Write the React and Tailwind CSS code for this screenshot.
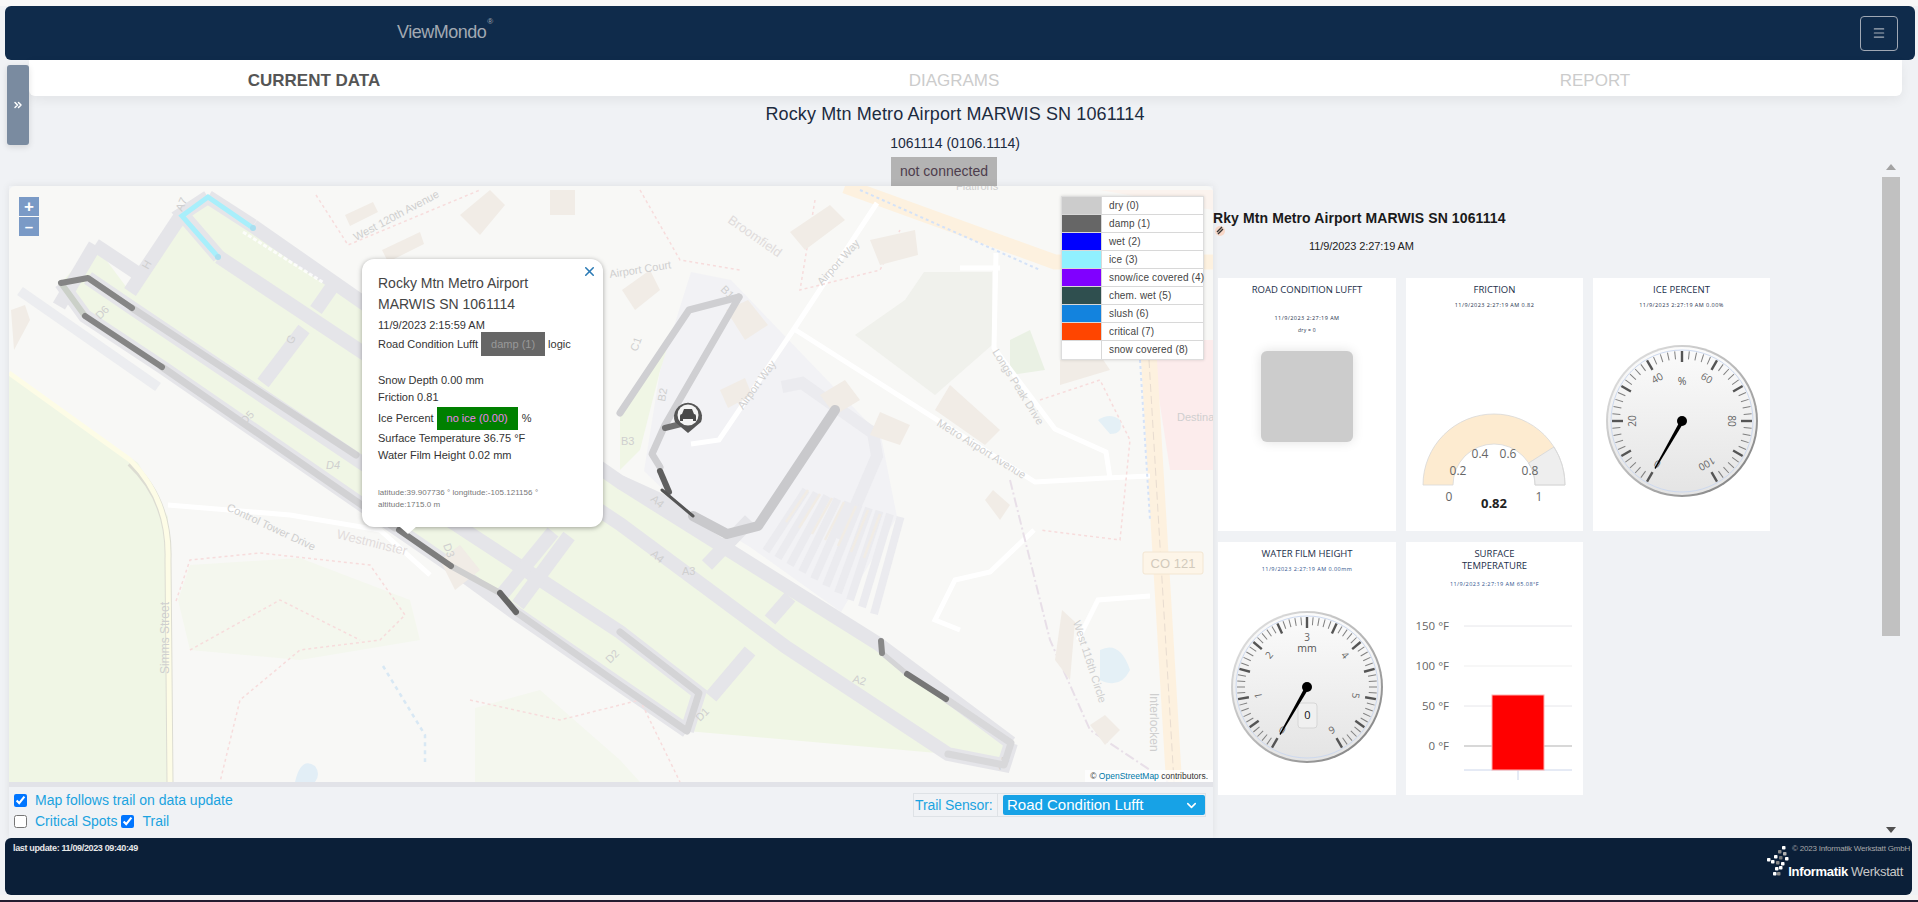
import React from "react";
import { ChevronDown, ChevronsRight, Menu, X } from "lucide-react";

const legend = [
  ["#cccccc", "dry (0)"],
  ["#666666", "damp (1)"],
  ["#0000ff", "wet (2)"],
  ["#90f0ff", "ice (3)"],
  ["#8000ff", "snow/ice covered (4)"],
  ["#2f4f4f", "chem. wet (5)"],
  ["#1383de", "slush (6)"],
  ["#ff4500", "critical (7)"],
  ["#ffffff", "snow covered (8)"],
];

const grass = [
  "208,197 620,482 877,643 1011,743 1004,765 948,754 687,731 620,685 451,566 85,316 61,283 95,245 130,292 182,214",
  "620,410 687,310 697,278 660,371 640,450 620,470",
  "9,375 138,463 168,517 170,782 9,782",
];

const paleGrass = [
  "475,708 540,690 620,760 640,782 475,782",
  "178,600 190,565 300,558 410,600 420,640 300,660 190,650",
];

const lanes = [
  "253,226 620,482 877,643 1011,743",
  "219,257 362,352 620,524 786,647 948,754 1004,765 1011,743",
  "88,278 132,308 362,463 620,632 699,693 687,731",
  "61,283 85,316 162,367 451,566 514,612 620,685 687,731",
  "208,197 253,226",
  "208,197 182,214 219,257",
  "182,214 130,292",
  "95,245 59,306",
  "95,245 146,279",
  "304,329 263,383",
  "332,287 316,310",
  "553,532 500,597",
  "569,536 518,605",
  "750,651 711,697",
  "790,597 770,620",
  "620,482 660,500 700,530",
  "707,565 750,520",
];

const roads = [
  "877,203 794,329 719,440 691,444",
  "794,329 1035,482 1106,478 1150,476",
  "996,253 994,348 1055,429 1106,452 1110,478",
  "1034,530 990,572 955,580 935,620 960,630",
  "1078,640 1098,600 1150,596",
  "168,505 290,515 380,530 430,575",
  "1000,268 960,268",
];

const pinkPaths = [
  "176,601 190,560 260,553 370,565 405,615 380,640 300,650 240,700 220,782",
  "190,650 280,600 360,640",
  "316,195 348,245 480,190",
  "815,200 800,290 880,270 900,230",
  "1040,400 1100,380 1130,440 1120,540 1040,530",
  "470,700 560,720 640,700 680,782",
  "640,190 680,260 740,270",
];

const buildings = [
  "345,215 373,202 378,212 350,226",
  "382,250 420,232 424,244 388,262",
  "460,215 490,190 505,205 480,235",
  "550,190 575,190 575,215 550,215",
  "726,310 748,300 768,325 745,340",
  "720,390 745,378 752,395 728,408",
  "790,232 830,205 845,220 805,250",
  "870,240 915,230 918,255 880,265",
  "950,385 1000,430 985,445 935,410",
  "993,490 1010,505 1000,520 985,500",
  "820,395 845,380 860,400 835,415",
  "880,412 910,425 900,445 870,435",
  "1062,610 1075,622 1070,680 1055,660",
  "1090,725 1105,715 1120,730 1105,745",
  "622,290 650,270 660,290 635,310",
  "11,310 25,305 30,320 14,350",
  "1060,360 1090,340 1110,370 1060,385",
  "440,560 460,545 480,570 455,590",
];

const fullTrail = [
  ["61,283 85,316", "#cbd0c8", 6],
  ["132,308 356,455", "#d2d2d4", 7],
  ["162,367 395,528", "#d2d2d4", 7],
  ["451,566 500,593", "#cfcfcf", 6],
  ["516,612 620,685 687,731 699,693 620,632", "#d4d4d6", 7],
  ["739,297 689,310 620,413", "#cfcfd2", 7],
  ["739,297 665,425 652,454 660,467", "#cfcfd2", 7],
  ["693,516 727,534 758,526 835,410", "#c9c9cc", 10],
  ["882,653 907,674", "#d4d4d6", 5],
  ["946,699 1011,743 1004,765 948,754", "#d8d8da", 7],
];

const darkTrail = [
  ["61,283 88,278 132,308", "#858585", 6],
  ["85,316 162,367", "#858585", 6],
  ["399,530 451,566", "#7d7d7d", 6],
  ["500,593 516,612", "#666666", 6],
  ["665,428 685,423", "#707070", 6],
  ["660,471 669,492", "#5f5f5f", 6],
  ["662,490 693,516", "#555555", 3],
  ["881,641 882,653", "#888888", 6],
  ["907,674 946,699", "#777777", 6],
];

function MapDrawing() {
  return (
    <svg viewBox="9 186 1204 596" className="block h-full w-full bg-[#f8f8f6]">
      {grass.map((p) => (
        <polygon key={p} points={p} fill="#f0f6e5" />
      ))}
      {paleGrass.map((p) => (
        <polygon key={p} points={p} fill="#f4f7ee" />
      ))}
      <polygon points="691,272 731,280 881,436 897,517 841,612 750,547 679,505 644,471 660,371" fill="#f2f2f5" />
      <polyline points="782,387 802,383 873,433 877,456 841,540" fill="none" stroke="#ebebef" strokeWidth="12" />
      <polygon points="924,272 992,272 992,345 935,395 855,335 905,300" fill="#f0f1ec" />
      <polygon points="1150,340 1213,340 1213,470 1170,470" fill="#fcecec" />
      <polygon points="1010,340 1030,330 1045,370 1010,375" fill="#eaf1e4" />
      <polygon points="1000,190 1213,190 1213,210 1100,190" fill="#fbf3ee" />
      <path d="M130 463 Q170 500 168 560 L170 782" fill="none" stroke="#dcdcd2" strokeWidth="7" />
      <path d="M9 373 L130 460 Q170 500 168 560 L170 782" fill="none" stroke="#fdfce6" strokeWidth="5" />
      {lanes.map((p) => (
        <polyline key={p} points={p} fill="none" stroke="#e5e5e9" strokeWidth="14" />
      ))}
      <polyline points="20,291 158,387" fill="none" stroke="#ecedf0" strokeWidth="10" />
      <polyline points="243,232 324,283" fill="none" stroke="#ffffff" strokeWidth="3" strokeDasharray="4 2" opacity="0.8" />
      {Array.from({ length: 10 }, (_, i) => (
        <line key={i} x1={766 + i * 12} y1={551 + i * 7} x2={806 + i * 10.5} y2={490 + i * 3} stroke="#ebebef" strokeWidth="8" />
      ))}
      {Array.from({ length: 7 }, (_, i) => (
        <line key={i} x1={786 + i * 13} y1={522 + i * 6} x2={808 + i * 12} y2={490 + i * 4} stroke="#f1ece5" strokeWidth="2.5" />
      ))}
      <polyline points="845,186 1055,262 1213,262" fill="none" stroke="#fdf1df" strokeWidth="15" />
      <polygon points="1141,360 1157,360 1182,782 1166,782" fill="#fdf1df" />
      <line x1="1149" y1="360" x2="1174" y2="782" stroke="#e8dcd0" strokeDasharray="8 4" />
      {roads.map((p) => (
        <polyline key={p} points={p} fill="none" stroke="#ffffff" strokeWidth="5" />
      ))}
      {pinkPaths.map((p) => (
        <polyline key={p} points={p} fill="none" stroke="#f7dcdc" strokeWidth="1.5" strokeDasharray="3 3" />
      ))}
      <polyline points="860,190 1040,270" fill="none" stroke="#d4e2f8" strokeWidth="2" strokeDasharray="3 3" />
      <polyline points="1140,360 1150,520" fill="none" stroke="#d4e2f8" strokeWidth="2" strokeDasharray="3 3" />
      <polyline points="383,666 425,735 425,762" fill="none" stroke="#d8e8f4" strokeWidth="2.5" strokeDasharray="4 4" />
      <polyline points="1010,480 1050,640 1090,730 1180,790" fill="none" stroke="#e8dfe8" strokeWidth="2" strokeDasharray="10 3 2 3" />
      <path d="M1100 650 q20 -10 30 20 q-10 20 -30 10 z" fill="#e4f0f6" />
      <path d="M1098 420 q12 -8 22 0 q4 14 -10 14 z" fill="#e4f0f6" />
      <path d="M295 782 q6 -26 20 -16 q6 8 0 16 z" fill="#e2eef6" />
      {buildings.map((p) => (
        <polygon key={p} points={p} fill="#f1ece6" />
      ))}
      <g fontFamily="'Liberation Sans', sans-serif" fill="#cfcfcf" fontSize="11">
        <text x="356" y="241" transform="rotate(-28 356 241)">West 120th Avenue</text>
        <text x="336" y="538" fontSize="13" fill="#e2dcdc" transform="rotate(14 336 538)">Westminster</text>
        <text x="226" y="510" transform="rotate(25 226 510)">Control Tower Drive</text>
        <text x="169" y="674" fontSize="12" transform="rotate(-90 169 674)">Simms Street</text>
        <text x="936" y="425" transform="rotate(32 936 425)">Metro Airport Avenue</text>
        <text x="992" y="352" transform="rotate(58 992 352)">Longs Peak Drive</text>
        <text x="822" y="286" transform="rotate(-48 822 286)">Airport Way</text>
        <text x="743" y="410" transform="rotate(-54 743 410)">Airport Way</text>
        <text x="727" y="222" fontSize="13" fill="#e0dcdc" transform="rotate(35 727 222)">Broomfield</text>
        <text x="610" y="278" transform="rotate(-9 610 278)">Airport Court</text>
        <text x="1150" y="693" fontSize="12" transform="rotate(90 1150 693)">Interlocken</text>
        <text x="1073" y="622" transform="rotate(72 1073 622)">West 116th Circle</text>
        <text x="1177" y="421">Destina</text>
        <text x="956" y="190">Flatirons</text>
        <text x="100" y="320" transform="rotate(-45 100 320)">D6</text>
        <text x="245" y="425" transform="rotate(-45 245 425)">D5</text>
        <text x="326" y="469" fontStyle="italic">D4</text>
        <text x="443" y="545" transform="rotate(70 443 545)">D3</text>
        <text x="610" y="664" transform="rotate(-45 610 664)">D2</text>
        <text x="700" y="722" transform="rotate(-45 700 722)">D1</text>
        <text x="182" y="212" transform="rotate(-65 182 212)">A7</text>
        <text x="650" y="500" transform="rotate(40 650 500)">A4</text>
        <text x="650" y="555" transform="rotate(40 650 555)">A4</text>
        <text x="682" y="575">A3</text>
        <text x="852" y="682" transform="rotate(15 852 682)">A2</text>
        <text x="1000" y="770" transform="rotate(-45 1000 770)">A1</text>
        <text x="720" y="290" transform="rotate(45 720 290)">B1</text>
        <text x="665" y="402" transform="rotate(-80 665 402)">B2</text>
        <text x="621" y="445">B3</text>
        <text x="637" y="352" transform="rotate(-70 637 352)">C1</text>
        <text x="292" y="345" transform="rotate(-60 292 345)">G</text>
        <text x="148" y="270" transform="rotate(-60 148 270)">H</text>
      </g>
      <rect x="1143" y="552" width="60" height="22" rx="2" fill="#fdf5e8" stroke="#f3e6d2" />
      <text x="1173" y="568" textAnchor="middle" fontFamily="'Liberation Sans', sans-serif" fontSize="13" fill="#d2cabc">CO 121</text>

      <polyline points="253,228 208,197 182,216 218,257" fill="none" stroke="#a8effb" strokeWidth="5" />
      <circle cx="253" cy="228" r="3" fill="#a8dff0" />
      <circle cx="218" cy="257" r="3" fill="#a8dff0" />
      {fullTrail.map(([p, c, w]) => (
        <polyline key={p} points={p} fill="none" stroke={c} strokeWidth={w} strokeLinejoin="round" strokeLinecap="round" />
      ))}
      {darkTrail.map(([p, c, w]) => (
        <polyline key={p} points={p} fill="none" stroke={c} strokeWidth={w} strokeLinejoin="round" strokeLinecap="round" />
      ))}

      <path d="M675 422 a14 14 0 1 1 26 0 l-13 11 z" fill="#555555" />
      <circle cx="688" cy="415" r="10.5" fill="#f4f4f4" />
      <path d="M682 414 l2 -5 h8 l2 5 a2 2 0 0 1 2 2 v5 h-3 v-2 h-10 v2 h-3 v-5 a2 2 0 0 1 2 -2 z" fill="#4a4a4a" />
    </svg>
  );
}

function Gauge({ id, step, majorEvery, labels, unit, unitY, showBox }) {
  const ticks = [];
  for (let a = -150, i = 0; a <= 150; a += step, i++) ticks.push({ a, major: i % majorEvery === 0 });
  return (
    <svg viewBox="0 0 160 160" className="block h-[160px] w-[160px]">
      <defs>
        <linearGradient id={`rim-${id}`} x1="0" y1="0" x2="1" y2="1">
          <stop offset="0" stopColor="#e8e8e8" />
          <stop offset="0.5" stopColor="#b8b8b8" />
          <stop offset="1" stopColor="#777777" />
        </linearGradient>
        <linearGradient id={`face-${id}`} x1="0" y1="0" x2="0" y2="1">
          <stop offset="0" stopColor="#fbfbfb" />
          <stop offset="1" stopColor="#e4e4e4" />
        </linearGradient>
      </defs>
      <circle cx="80" cy="80" r="76" fill={`url(#rim-${id})`} />
      <circle cx="80" cy="80" r="74" fill={`url(#face-${id})`} />
      <circle cx="80" cy="80" r="71" fill="none" stroke="#cdd9ef" />
      {ticks.map(({ a, major }) => (
        <line
          key={a}
          x1="80"
          y1="10"
          x2="80"
          y2={major ? 21 : 18}
          stroke={major ? "#555555" : "#808080"}
          strokeWidth={major ? 2.4 : 1}
          transform={`rotate(${a} 80 80)`}
        />
      ))}
      {labels.map(([t, a]) => (
        <text
          key={t}
          x="80"
          y="34"
          textAnchor="middle"
          fontSize="10"
          fill="#666666"
          fontFamily="'Open Sans', sans-serif"
          transform={`rotate(${a} 80 80)`}
        >
          {t}
        </text>
      ))}
      <text x="80" y={unitY} textAnchor="middle" fontSize="10.5" fill="#555555" fontFamily="'Open Sans', sans-serif">
        {unit}
      </text>
      {showBox && (
        <g>
          <rect x="71" y="96" width="19" height="25" rx="3" fill="#f0f0f0" stroke="#d6d6d6" />
          <text x="80.5" y="112" textAnchor="middle" fontSize="11" fill="#111111" fontFamily="'Open Sans', sans-serif">0</text>
        </g>
      )}
      <polygon points="78,80 82,81 53.5,128 52.5,127" fill="#000000" />
      <circle cx="80" cy="80" r="5" fill="#000000" />
    </svg>
  );
}

function arc(a0, a1, r0, r1, cx, cy) {
  const pt = (r, a) => `${cx - r * Math.cos(a)} ${cy - r * Math.sin(a)}`;
  return `M${pt(r1, a0)} A${r1} ${r1} 0 0 1 ${pt(r1, a1)} L${pt(r0, a1)} A${r0} ${r0} 0 0 0 ${pt(r0, a0)} Z`;
}

function FrictionGauge() {
  const cut = 0.82 * Math.PI;
  return (
    <svg viewBox="0 0 177 110" className="block h-[110px] w-[177px]">
      <path d={arc(0, cut, 41, 71, 88, 77)} fill="#fdebd0" />
      <path d={arc(cut, Math.PI, 41, 71, 88, 77)} fill="#eeeeee" stroke="#d4d4d4" strokeWidth="0.8" />
      <path d={arc(0, Math.PI, 41, 71, 88, 77)} fill="none" stroke="#d8d8d8" strokeWidth="0.8" />
      <g fontFamily="'Open Sans', sans-serif" fontSize="12" fill="#666666" textAnchor="middle">
        <text x="43" y="93">0</text>
        <text x="133" y="93">1</text>
        <text x="52" y="67">0.2</text>
        <text x="74" y="50">0.4</text>
        <text x="102" y="50">0.6</text>
        <text x="124" y="67">0.8</text>
      </g>
      <text x="88" y="100" textAnchor="middle" fontFamily="'Open Sans', sans-serif" fontSize="13" fontWeight="700" fill="#222222">0.82</text>
    </svg>
  );
}

function TempChart() {
  const rows = [["150 °F", 25, "#e6e6ea"], ["100 °F", 65, "#efefef"], ["50 °F", 105, "#e6e6ea"], ["0 °F", 145, "#d8d8d8"]];
  return (
    <svg viewBox="0 0 177 190" className="block h-[190px] w-[177px]">
      {rows.map(([t, y, c]) => (
        <g key={t}>
          <line x1="58" x2="166" y1={y} y2={y} stroke={c} strokeWidth={t === "0 °F" ? 2 : 1} />
          <text x="43" y={y + 4} textAnchor="end" fontFamily="'Open Sans', sans-serif" fontSize="11.5" fill="#666666">{t}</text>
        </g>
      ))}
      <line x1="58" x2="166" y1="169" y2="169" stroke="#ccd6eb" />
      <line x1="112" x2="112" y1="169" y2="179" stroke="#ccd6eb" />
      <rect x="86" y="94" width="52" height="75" fill="#ff0000" stroke="#ffb0b0" />
    </svg>
  );
}

function Card({ title, stamp, extra, stampGap = "mt-[5px]", stampColor = "text-[#1c2f4a]", children, topClass = "" }) {
  return (
    <div className="flex h-[253px] flex-col items-center bg-white pt-[6px] font-['Open_Sans',sans-serif]">
      <div className="text-center text-[9.5px] leading-[12px] whitespace-nowrap text-[#1c2f4a]">{title}</div>
      <div className={`${stampGap} whitespace-nowrap text-[5.5px] leading-[8px] tracking-[0.45px] ${stampColor}`}>{stamp}</div>
      {extra && <div className="mt-[4px] text-[5px] leading-[8px] tracking-[0.3px] text-[#1c2f4a]">{extra}</div>}
      <div className={topClass}>{children}</div>
    </div>
  );
}

function Scrollbar() {
  return (
    <div className="mr-[18px] ml-auto flex h-full w-[18px] shrink-0 flex-col items-center">
      <div className="mt-[-22px] h-0 w-0 border-x-[5px] border-b-[6px] border-x-transparent border-b-[#a3a3a3]" />
      <div className="mt-[7px] h-[459px] w-[18px] bg-[#c1c1c1]" />
      <div className="mt-[191px] h-0 w-0 border-x-[5px] border-t-[6px] border-x-transparent border-t-[#505050]" />
    </div>
  );
}

function LogoDots() {
  const dots = [
    [17, 1, "#ffffff"], [13, 5, "#8a8a8a"], [18, 7, "#b0b0b0"], [9, 10, "#ffffff"], [14, 11, "#777777"],
    [20, 12, "#ffffff"], [2, 13, "#ffffff"], [6, 15, "#ffffff"], [11, 16, "#8a8a8a"], [16, 17, "#ffffff"],
    [10, 22, "#ffffff"], [14, 21, "#ffffff"], [8, 27, "#ffffff"], [12, 27, "#8a8a8a"],
  ];
  return (
    <svg viewBox="0 0 25 32" className="h-[32px] w-[25px]">
      {dots.map(([x, y, c]) => (
        <rect key={`${x}-${y}`} x={x} y={y} width="3.5" height="3.5" rx="0.8" fill={c} />
      ))}
    </svg>
  );
}

export default function App() {
  return (
    <div className="relative flex h-[902px] w-full flex-col overflow-hidden bg-[#f0f2f5] font-['Liberation_Sans',Arial,sans-serif]">
      <div className="h-[6px] shrink-0 bg-[#f8f8f8]" />
      <header className="mr-[3px] ml-[5px] flex h-[54px] shrink-0 items-center rounded-[6px] bg-[#0f2b4b] pr-[17px]">
        <div className="mb-[2px] ml-[392px] flex items-start text-[18px] tracking-[-0.5px] text-[#a2a9b2]">
          ViewMondo<span className="mt-[-3px] ml-[1px] text-[8px]">®</span>
        </div>
        <button className="ml-auto flex h-[35px] w-[38px] items-center justify-center rounded-[4px] border border-[#a0a8b4] text-[#a8b0ba]">
          <Menu size={14} strokeWidth={2} />
        </button>
      </header>

      <nav className="mr-[16px] ml-[29px] grid h-[36px] shrink-0 grid-cols-[570px_710px_572px] items-center rounded-b-[6px] bg-white pt-[6px] text-[17px] shadow-[0_4px_12px_rgba(0,0,0,0.06)]">
        <div className="text-center font-bold text-[#555555]">CURRENT DATA</div>
        <div className="text-center text-[#cccccc]">DIAGRAMS</div>
        <div className="text-center text-[#cccccc]">REPORT</div>
      </nav>

      {/* collapsed side menu handle */}
      <button className="absolute top-[65px] left-[7px] flex h-[80px] w-[22px] items-center justify-center rounded-[3px] bg-[#7a8ba0] text-white shadow-[0_2px_6px_rgba(0,0,0,0.12)]">
        <ChevronsRight size={12} strokeWidth={3} />
      </button>

      <div className="mr-[8px] flex h-[90px] shrink-0 flex-col items-center text-[#1c2b3f]">
        <h1 className="mt-[7px] text-[18px] leading-[22px] tracking-[0.12px]">Rocky Mtn Metro Airport MARWIS SN 1061114</h1>
        <div className="mt-[8px] text-[14px] leading-[20px]">1061114 (0106.1114)</div>
        <div className="mt-[4px] mr-[22px] flex h-[29px] w-[106px] items-center justify-center bg-[#b3b3b3] text-[14px] text-[#4d3d4d]">
          not connected
        </div>
      </div>

      <main className="flex h-[652px] shrink-0">
        <section className="ml-[9px] flex w-[1204px] shrink-0 flex-col shadow-[0_0_8px_rgba(0,0,0,0.08)]">
          <div className="relative h-[596px] shrink-0 overflow-hidden rounded-t-[6px]">
            <MapDrawing />

            <div className="absolute top-[11px] left-[10px] flex w-[20px] flex-col gap-[1px] bg-white/40">
              <button className="flex h-[19px] items-center justify-center bg-[#7a9ac6] text-[17px] leading-none font-bold text-white">+</button>
              <button className="flex h-[19px] items-center justify-center bg-[#7a9ac6] text-[15px] leading-none font-bold text-white">–</button>
            </div>

            <div className="absolute top-[10px] left-[1052px] w-[143px] border border-[#dddddd] bg-white shadow-[0_0_3px_rgba(0,0,0,0.15)]">
              {legend.map(([color, label]) => (
                <div key={label} className="flex h-[18px] border-b border-[#d8d8d8] last:border-b-0">
                  <div className="h-full w-[40px] shrink-0 border-r border-[#d8d8d8]" style={{ backgroundColor: color }} />
                  <div className="pl-[7px] text-[10px] leading-[18px] tracking-[0.15px] whitespace-nowrap text-[#444444]">{label}</div>
                </div>
              ))}
            </div>

            <div className="absolute top-[73px] left-[353px] h-[268px] w-[241px] rounded-[12px] bg-white pt-[14px] pl-[16px] text-[11px] leading-[17px] text-[#333333] shadow-[0_1px_5px_rgba(0,0,0,0.35)]">
              <X size={15} strokeWidth={2.5} className="absolute top-[5px] right-[6px] text-[#2a7ab5]" />
              <div className="text-[14px] leading-[21px] text-[#444444]">
                Rocky Mtn Metro Airport
                <br />
                MARWIS SN 1061114
              </div>
              <div className="mt-[1px] leading-[18px]">11/9/2023 2:15:59 AM</div>
              <div className="mt-[-2px] flex h-[24px] items-center">
                Road Condition Lufft
                <span className="ml-[3px] flex h-[24px] w-[64px] items-center justify-center bg-[#666666] text-[#999999]">damp (1)</span>
                <span className="ml-[3px]">logic</span>
              </div>
              <div className="mt-[16px]">Snow Depth 0.00 mm</div>
              <div>Friction 0.81</div>
              <div className="mt-[1px] flex h-[23px] items-center">
                Ice Percent
                <span className="ml-[3px] flex h-[23px] w-[81px] items-center justify-center bg-[#008000] text-[#ee82ee]">no ice (0.00)</span>
                <span className="ml-[4px]">%</span>
              </div>
              <div>Surface Temperature 36.75 °F</div>
              <div>Water Film Height 0.02 mm</div>
              <div className="mt-[23px] text-[8px] leading-[12px] tracking-[0.05px] text-[#777777]">
                latitude:39.907736 ° longitude:-105.121156 °
                <br />
                altitude:1715.0 m
              </div>
              <div className="absolute bottom-[-7px] left-[37px] h-0 w-0 border-x-[9px] border-t-[8px] border-x-transparent border-t-white" />
            </div>

            <div className="absolute right-0 bottom-0 bg-white/75 px-[5px] text-[8.5px] leading-[12px] text-[#333333]">
              © <span className="text-[#0078a8]">OpenStreetMap</span> contributors.
            </div>
          </div>

          <div className="h-[5px] shrink-0 bg-[#e2e3e8]" />

          <div className="flex flex-1 items-start justify-between bg-[#f0f2f5] pr-[7px] pl-[5px] text-[14px] text-[#1ba3e0]">
            <div className="mt-[3px] flex flex-col">
              <label className="flex h-[21px] items-center">
                <input type="checkbox" defaultChecked className="h-[13px] w-[13px]" />
                <span className="ml-[8px]">Map follows trail on data update</span>
              </label>
              <label className="flex h-[21px] items-center">
                <input type="checkbox" className="h-[13px] w-[13px]" />
                <span className="ml-[8px]">Critical Spots</span>
                <input type="checkbox" defaultChecked className="ml-[4px] h-[13px] w-[13px]" />
                <span className="ml-[8px]">Trail</span>
              </label>
            </div>
            <div className="mt-[6px] flex h-[24px] w-[293px] items-center border border-[#dee2e6] bg-[#f0f2f5]">
              <span className="w-[84px] shrink-0 border-r border-[#dee2e6] pl-[1px] text-[14px] leading-[22px] tracking-[-0.1px]">Trail Sensor:</span>
              <div className="ml-[5px] flex h-[20px] flex-1 items-center justify-between rounded-[2px] bg-[#17a2e6] pr-[6px] pl-[4px] text-[15px] text-white">
                Road Condition Lufft
                <ChevronDown size={15} strokeWidth={2.5} />
              </div>
            </div>
          </div>
        </section>

        <section className="flex min-w-0 flex-1">
          <div className="w-[560px] shrink-0">
            <div className="mt-[24px] text-[14px] leading-[16px] font-bold tracking-[0.1px] whitespace-nowrap text-[#1a1a1a]">
              Rky Mtn Metro Airport MARWIS SN 1061114
            </div>
            <svg viewBox="0 0 10 10" className="ml-[2px] h-[10px] w-[10px]">
              <circle cx="5" cy="5" r="5" fill="#f8d8c8" />
              <path d="M2 6 L7 1 M3 8 L8 3" stroke="#333333" strokeWidth="1.4" />
            </svg>
            <div className="mt-[3px] ml-[96px] text-[11px] leading-[14px] tracking-[-0.1px] text-[#222222]">11/9/2023 2:27:19 AM</div>
            <div className="mt-[25px] ml-[5px] grid w-[557px] grid-cols-[178px_177px_177px] gap-x-[10px] gap-y-[11px]">
              <Card title="ROAD CONDITION LUFFT" stamp="11/9/2023 2:27:19 AM" extra="dry = 0" stampGap="mt-[18px]" topClass="mt-[17px]">
                <div className="h-[91px] w-[92px] rounded-[6px] bg-[#cccccc] shadow-[0_0_12px_rgba(0,0,0,0.12)]" />
              </Card>
              <Card title="FRICTION" stamp="11/9/2023 2:27:19 AM 0.82" topClass="mt-[99px]">
                <FrictionGauge />
              </Card>
              <Card title="ICE PERCENT" stamp="11/9/2023 2:27:19 AM 0.00%" topClass="mt-[32px]">
                <Gauge
                  id="ice"
                  step={6}
                  majorEvery={5}
                  unit="%"
                  unitY="44"
                  labels={[["0", -150], ["20", -90], ["40", -30], ["60", 30], ["80", 90], ["100", 150]]}
                />
              </Card>
              <Card title="WATER FILM HEIGHT" stamp="11/9/2023 2:27:19 AM 0.00mm" stampColor="text-[#2c4f8a]" topClass="mt-[34px]">
                <Gauge
                  id="water"
                  step={5}
                  majorEvery={5}
                  unit="mm"
                  unitY="45"
                  showBox
                  labels={[["0", -150], ["1", -100], ["2", -50], ["3", 0], ["4", 50], ["5", 100], ["6", 150]]}
                />
              </Card>
              <Card
                title={
                  <>
                    SURFACE
                    <br />
                    TEMPERATURE
                  </>
                }
                stamp="11/9/2023 2:27:19 AM 65.08°F"
                stampGap="mt-[8px]"
                stampColor="text-[#2c4f8a]"
                topClass="mt-[13px]"
              >
                <TempChart />
              </Card>
            </div>
          </div>
          <Scrollbar />
        </section>
      </main>

      <footer className="mr-[6px] ml-[5px] flex h-[57px] shrink-0 justify-between rounded-[6px] bg-[#0b1f38] pt-[6px] pr-[2px] pl-[8px]">
        <div className="text-[9px] leading-[9px] font-bold tracking-[-0.35px] text-[#e8e8e8]">last update: 11/09/2023 09:40:49</div>
        <div className="flex flex-col items-end">
          <div className="text-[8px] leading-[9px] tracking-[-0.2px] text-[#a8a8a8]">© 2023 Informatik Werkstatt GmbH</div>
          <div className="mt-[-8px] mr-[7px] flex items-end">
            <LogoDots />
            <span className="mb-[-3px] ml-[-2px] text-[13px] leading-[16px] font-bold tracking-[-0.3px] text-white">Informatik</span>
            <span className="mb-[-3px] ml-[3px] text-[13px] leading-[16px] font-light tracking-[-0.3px] text-[#c8c8c8]">Werkstatt</span>
          </div>
        </div>
      </footer>
      <div className="h-[5px] shrink-0 bg-[#f4f4f4]" />
      <div className="h-[2px] shrink-0 bg-[#241c30]" />
    </div>
  );
}
